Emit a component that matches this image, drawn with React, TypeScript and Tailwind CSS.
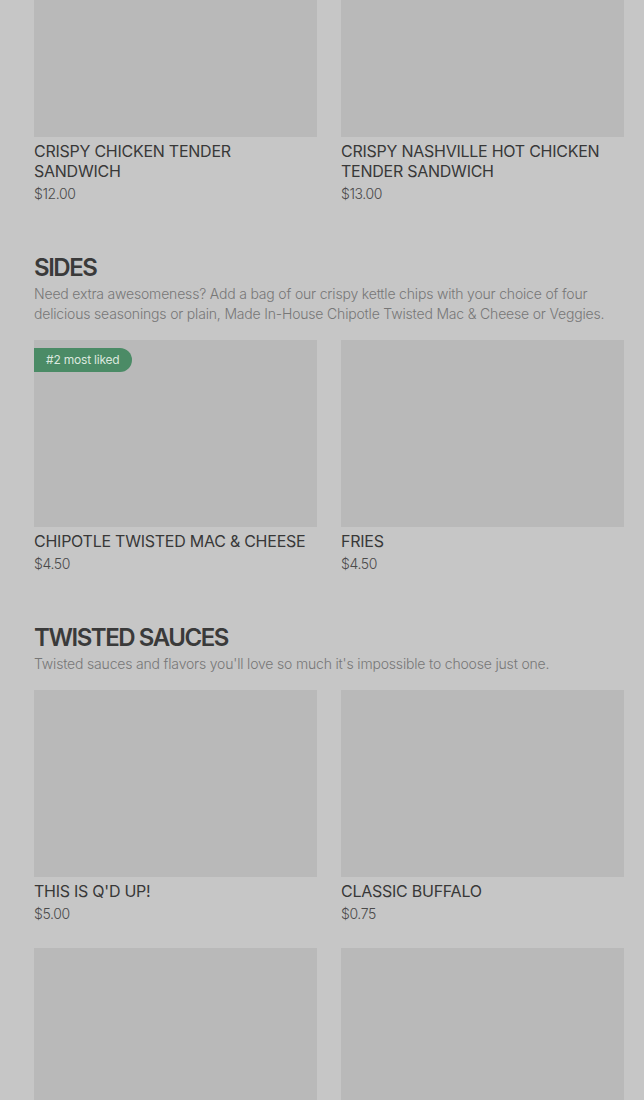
type Item = { name: string; price: string; badge?: string };

type Section = { title?: string; description?: string; items: Item[] };

const SECTIONS: Section[] = [
  {
    items: [
      { name: "CRISPY CHICKEN TENDER SANDWICH", price: "$12.00" },
      { name: "CRISPY NASHVILLE HOT CHICKEN TENDER SANDWICH", price: "$13.00" },
    ],
  },
  {
    title: "SIDES",
    description:
      "Need extra awesomeness? Add a bag of our crispy kettle chips with your choice of four delicious seasonings or plain, Made In-House Chipotle Twisted Mac & Cheese or Veggies.",
    items: [
      { name: "CHIPOTLE TWISTED MAC & CHEESE", price: "$4.50", badge: "#2 most liked" },
      { name: "FRIES", price: "$4.50" },
    ],
  },
  {
    title: "TWISTED SAUCES",
    description:
      "Twisted sauces and flavors you'll love so much it's impossible to choose just one.",
    items: [
      { name: "THIS IS Q'D UP!", price: "$5.00" },
      { name: "CLASSIC BUFFALO", price: "$0.75" },
      { name: "", price: "" },
      { name: "", price: "" },
    ],
  },
];

function ItemCard({ item }: { item: Item }) {
  return (
    <div>
      <div className="relative h-[187px] bg-[#b9b9b9]">
        {item.badge && (
          <span className="absolute left-0 top-2 h-6 pl-3 pr-3 flex items-center rounded-r-full bg-[#4b8b66] text-[#dbe8df] text-xs tracking-[-0.2px]">
            {item.badge}
          </span>
        )}
      </div>
      {item.name && (
        <div className="mt-1">
          <h3 className="text-base leading-5 tracking-[-0.25px] text-[#383838]">{item.name}</h3>
          <p className="mt-[3px] text-sm leading-5 font-light tracking-[-0.4px] text-[#4a4a4a]">
            {item.price}
          </p>
        </div>
      )}
    </div>
  );
}

export default function App() {
  return (
    <div
      className="min-h-[1100px] bg-[#c6c6c6] overflow-hidden"
      style={{ fontFamily: "Inter, 'Noto Sans', sans-serif" }}
    >
      <div className="-mt-[50px] pl-[34px] pr-5 space-y-12">
        {SECTIONS.map((section, i) => (
          <section key={i}>
            {section.title && (
              <div className="mb-4">
                <h2 className="text-2xl leading-8 font-semibold tracking-[-0.06em] text-[#3a3a3a]">
                  {section.title}
                </h2>
                <p className="text-sm leading-5 font-light tracking-[-0.18px] text-[#777777]">
                  {section.description}
                </p>
              </div>
            )}
            <div className="grid grid-cols-2 gap-x-6 gap-y-6">
              {section.items.map((item, j) => (
                <ItemCard key={j} item={item} />
              ))}
            </div>
          </section>
        ))}
      </div>
    </div>
  );
}
